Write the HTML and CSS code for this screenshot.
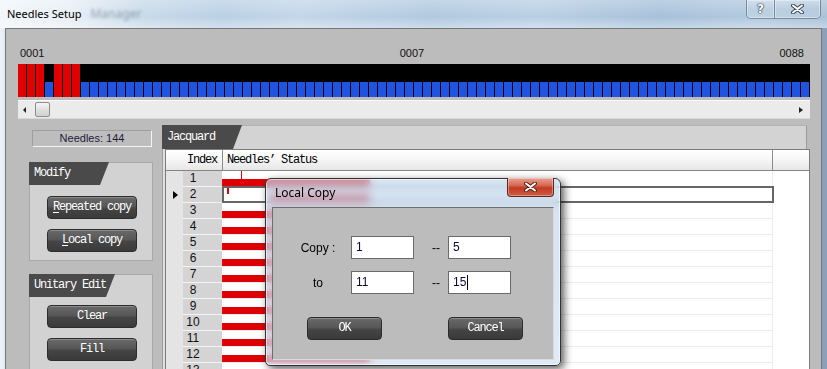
FILE: index.html
```html
<!DOCTYPE html>
<html>
<head>
<meta charset="utf-8">
<title>Needles Setup</title>
<link rel="stylesheet" href="styles.css">
</head>
<body>
<div class="win">
  <div class="titlebar">
    <span class="title">Needles Setup</span>
    <span class="ghost">Manager</span>
    <div class="caps">
      <div class="cap cap-help">?</div>
      <div class="cap cap-close">
        <svg width="13" height="10" viewBox="0 0 13 10"><path d="M2 1.5L11 8.5M11 1.5L2 8.5" stroke="#3b4a5a" stroke-width="4" stroke-linecap="round"/><path d="M2 1.5L11 8.5M11 1.5L2 8.5" stroke="#fff" stroke-width="2" stroke-linecap="round"/></svg>
      </div>
    </div>
  </div>
  <div class="body">
    <div class="client">
      <div class="ruler"><span>0001</span><span>0007</span><span>0088</span></div>
      <div class="needles">
        <i class="r"></i><i class="r"></i><i class="r"></i><i class="b"></i><i class="r"></i><i class="r"></i><i class="r"></i><i class="b"></i>
        <i class="b"></i><i class="b"></i><i class="b"></i><i class="b"></i><i class="b"></i><i class="b"></i><i class="b"></i><i class="b"></i>
        <i class="b"></i><i class="b"></i><i class="b"></i><i class="b"></i><i class="b"></i><i class="b"></i><i class="b"></i><i class="b"></i>
        <i class="b"></i><i class="b"></i><i class="b"></i><i class="b"></i><i class="b"></i><i class="b"></i><i class="b"></i><i class="b"></i>
        <i class="b"></i><i class="b"></i><i class="b"></i><i class="b"></i><i class="b"></i><i class="b"></i><i class="b"></i><i class="b"></i>
        <i class="b"></i><i class="b"></i><i class="b"></i><i class="b"></i><i class="b"></i><i class="b"></i><i class="b"></i><i class="b"></i>
        <i class="b"></i><i class="b"></i><i class="b"></i><i class="b"></i><i class="b"></i><i class="b"></i><i class="b"></i><i class="b"></i>
        <i class="b"></i><i class="b"></i><i class="b"></i><i class="b"></i><i class="b"></i><i class="b"></i><i class="b"></i><i class="b"></i>
        <i class="b"></i><i class="b"></i><i class="b"></i><i class="b"></i><i class="b"></i><i class="b"></i><i class="b"></i><i class="b"></i>
        <i class="b"></i><i class="b"></i><i class="b"></i><i class="b"></i><i class="b"></i><i class="b"></i><i class="b"></i><i class="b"></i>
        <i class="b"></i><i class="b"></i><i class="b"></i><i class="b"></i><i class="b"></i><i class="b"></i><i class="b"></i><i class="b"></i>
      </div>
      <div class="hscroll">
        <div class="sbtn"><span class="arr-l"></span></div>
        <div class="thumb"></div>
        <div class="track"></div>
        <div class="sbtn"><span class="arr-r"></span></div>
      </div>
      <div class="lower">
        <div class="leftpanel">
          <div class="count">Needles: 144</div>
          <div class="group g-modify">
            <div class="ghead mono">Modify</div>
            <div class="btn mono"><u>R</u>epeated copy</div>
            <div class="btn mono btn-second"><u>L</u>ocal copy</div>
          </div>
          <div class="group g-unit">
            <div class="ghead ghead-wide mono">Unitary Edit</div>
            <div class="btn mono btn-first-u">Clear</div>
            <div class="btn mono btn-second">Fill</div>
          </div>
        </div>
        <div class="tabs">
          <div class="strip"><div class="tab mono">Jacquard</div></div>
          <div class="page">
            <div class="grid">
              <div class="ghdr mono">
                <div class="h-index">Index</div>
                <div class="h-status">Needles’ Status</div>
                <div class="h-extra"></div>
              </div>
              <div class="row"><div class="rh"></div><div class="idx">1</div><div class="st"><i class="tick"></i><b class="band"></b></div><div class="ex"></div></div>
              <div class="row"><div class="rh"><span class="cur"></span></div><div class="idx">2</div><div class="st"><i class="tick2"></i><b class="band band-hidden"></b><span class="sel"></span></div><div class="ex"></div></div>
              <div class="row"><div class="rh"></div><div class="idx">3</div><div class="st"><b class="band"></b></div><div class="ex"></div></div>
              <div class="row"><div class="rh"></div><div class="idx">4</div><div class="st"><b class="band"></b></div><div class="ex"></div></div>
              <div class="row"><div class="rh"></div><div class="idx">5</div><div class="st"><b class="band"></b></div><div class="ex"></div></div>
              <div class="row"><div class="rh"></div><div class="idx">6</div><div class="st"><b class="band"></b></div><div class="ex"></div></div>
              <div class="row"><div class="rh"></div><div class="idx">7</div><div class="st"><b class="band"></b></div><div class="ex"></div></div>
              <div class="row"><div class="rh"></div><div class="idx">8</div><div class="st"><b class="band"></b></div><div class="ex"></div></div>
              <div class="row"><div class="rh"></div><div class="idx">9</div><div class="st"><b class="band"></b></div><div class="ex"></div></div>
              <div class="row"><div class="rh"></div><div class="idx">10</div><div class="st"><b class="band"></b></div><div class="ex"></div></div>
              <div class="row"><div class="rh"></div><div class="idx">11</div><div class="st"><b class="band"></b></div><div class="ex"></div></div>
              <div class="row"><div class="rh"></div><div class="idx">12</div><div class="st"><b class="band"></b></div><div class="ex"></div></div>
              <div class="row"><div class="rh"></div><div class="idx">13</div><div class="st"><b class="band"></b></div><div class="ex"></div></div>
            </div>
          </div>
        </div>
      </div>
    </div>
  </div>

  <div class="dialog">
    <div class="dlg-title">Local Copy</div>
    <div class="dlg-close">
      <svg width="13" height="10" viewBox="0 0 13 10"><path d="M2 1.5L11 8.5M11 1.5L2 8.5" stroke="#5a2418" stroke-width="4" stroke-linecap="round"/><path d="M2 1.5L11 8.5M11 1.5L2 8.5" stroke="#fff" stroke-width="2" stroke-linecap="round"/></svg>
    </div>
    <div class="dlg-client">
      <div class="drow">
        <span class="dlabel">Copy :</span>
        <span class="inp">1</span>
        <span class="dash">--</span>
        <span class="inp">5</span>
      </div>
      <div class="drow drow2">
        <span class="dlabel">to</span>
        <span class="inp">11</span>
        <span class="dash">--</span>
        <span class="inp">15<i class="caret"></i></span>
      </div>
      <div class="dbtns">
        <div class="btn mono dbtn-ok">OK</div>
        <div class="btn mono dbtn-cancel">Cancel</div>
      </div>
    </div>
  </div>
</div>
</body>
</html>
```

FILE: styles.css
```css
* { box-sizing: border-box; margin: 0; padding: 0; }
html, body { width: 827px; height: 369px; overflow: hidden; }
body {
  font-family: "Liberation Sans", Arial, sans-serif;
  font-size: 12px;
  color: #000;
  background: #dfe8f1;
}
.mono {
  font-family: "Liberation Mono", "Courier New", monospace;
  font-size: 12px;
  letter-spacing: -1.2px;
}

.win {
  position: relative;
  width: 827px;
  height: 369px;
  display: flex;
  flex-direction: column;
  background: linear-gradient(90deg, #eef3f8 0, #e2ebf4 5px, #b8cde2 800px, #8aa1b9 822px, #8aa1b9 827px);
  overflow: hidden;
}

/* title bar */
.titlebar {
  height: 28px;
  flex: none;
  display: flex;
  align-items: center;
  padding-left: 7px;
  position: relative;
  background:
    linear-gradient(180deg, rgba(255,255,255,0.25) 0, rgba(255,255,255,0) 60%, rgba(255,255,255,0.35) 100%),
    linear-gradient(90deg, #f2f6fa 0, #e8eff6 70px, #c9dae9 140px, #bad0e5 220px, #c3d6e9 300px, #b1c9e0 430px, #b9cfe4 540px, #a7c1da 660px, #b2c9df 760px, #a9c1d8 827px);
}
.title {
  font-family: "Noto Sans", "Open Sans", sans-serif;
  font-size: 11px;
  color: #000;
  padding-bottom: 2px;
}
.ghost {
  font-family: "Noto Sans", sans-serif;
  font-size: 12px;
  margin-left: 9px;
  color: rgba(60, 80, 100, 0.45);
  filter: blur(1.4px);
  padding-bottom: 2px;
}
.caps {
  position: absolute;
  top: 0;
  right: 6px;
  display: flex;
}
.cap {
  height: 19px;
  display: flex;
  align-items: center;
  justify-content: center;
  background: linear-gradient(180deg, rgba(255,255,255,0.25), rgba(255,255,255,0.05) 50%, rgba(255,255,255,0.2));
  border: 1px solid rgba(60, 80, 100, 0.55);
  border-top: none;
  box-shadow: inset 0 0 0 1px rgba(255,255,255,0.35);
}
.cap-help {
  width: 28px;
  border-radius: 0 0 0 5px;
  border-right: none;
  font-family: "DejaVu Sans", sans-serif;
  font-weight: bold;
  font-size: 12px;
  color: #fff;
  text-shadow: 0 0 1px #2c3a48, 0 0 1px #2c3a48, 0 0 2px #2c3a48;
}
.cap-close {
  width: 47px;
  border-radius: 0 0 5px 0;
}

/* body/client */
.body {
  flex: 1;
  display: flex;
  padding: 0 5px 0 5px;
  min-height: 0;
}
.client {
  flex: 1;
  background: #bcbcbc;
  border: 1px solid #777;
  border-bottom: none;
  display: flex;
  flex-direction: column;
  min-height: 0;
}
.ruler {
  margin: 18px 11px 0 12px;
  height: 13px;
  line-height: 13px;
  display: flex;
  justify-content: space-between;
  padding: 0 6px 0 2px;
  font-size: 11px;
  color: #111;
}
.needles {
  margin: 4px 11px 0 12px;
  height: 33px;
  background: #000;
  display: flex;
  align-items: flex-end;
}
.needles i {
  display: block;
  width: 8px;
  margin-right: 1px;
  flex: none;
}
.needles .r { height: 33px; background: #e00000; }
.needles .b { height: 15px; background: #1f53e0; }

.hscroll {
  margin: 3px 11px 0 12px;
  height: 19px;
  background: #ebebeb;
  border-top: 1px solid #fafafa;
  border-bottom: 1px solid #d8d8d8;
  display: flex;
  align-items: center;
}
.sbtn {
  width: 16px;
  height: 17px;
  display: flex;
  align-items: center;
  justify-content: center;
}
.arr-l {
  width: 0; height: 0;
  border-right: 3px solid #222;
  border-top: 3px solid transparent;
  border-bottom: 3px solid transparent;
  margin-left: -4px;
}
.arr-r {
  width: 0; height: 0;
  border-left: 4px solid #222;
  border-top: 3px solid transparent;
  border-bottom: 3px solid transparent;
  margin-left: -2px;
}
.thumb {
  width: 15px;
  height: 15px;
  margin-left: 1px;
  border: 1px solid #8d8d8d;
  border-radius: 2px;
  background: linear-gradient(180deg, #f6f6f6, #dedede 55%, #d0d0d0);
}
.track { flex: 1; }

.lower {
  flex: 1;
  margin-top: 6px;
  padding-right: 11px;
  display: flex;
  min-height: 0;
}

/* left panel */
.leftpanel {
  width: 156px;
  flex: none;
  display: flex;
  flex-direction: column;
}
.count {
  margin: 5px 0 0 26px;
  width: 120px;
  height: 17px;
  line-height: 15px;
  text-align: center;
  font-size: 11px;
  color: #1c1c3a;
  background: #bdbdbd;
  border: 1px solid;
  border-color: #9e9e9e #f4f4f4 #f4f4f4 #9e9e9e;
}
.group {
  margin: 15px 0 0 23px;
  width: 124px;
  background: #d2d2d2;
  border: 1px solid #a8a8a8;
  display: flex;
  flex-direction: column;
  flex: none;
}
.g-modify { height: 99px; }
.g-unit { margin-top: 13px; height: 120px; }
.ghead {
  margin: -1px 0 0 -1px;
  width: 80px;
  height: 23px;
  line-height: 23px;
  padding-left: 5px;
  color: #fff;
  background: #4a4a4a;
  clip-path: polygon(0 0, 100% 0, calc(100% - 9px) 100%, 0 100%);
}
.ghead-wide { width: 86px; }
.btn {
  height: 23px;
  line-height: 21px;
  color: #fff;
  text-align: center;
  border: 1px solid #2c2c2c;
  border-radius: 4px;
  background: linear-gradient(180deg, #6a6a6a 0, #575757 45%, #454545 55%, #3a3a3a 100%);
  box-shadow: inset 0 1px 0 rgba(255,255,255,0.22);
}
.group .btn {
  margin: 11px 0 0 17px;
  width: 90px;
}
.group .btn-first-u { margin-top: 8px; }
.group .btn-second { margin-top: 10px; }
.btn u { text-decoration: underline; text-underline-offset: 2px; }

/* tabs */
.tabs {
  flex: 1;
  display: flex;
  flex-direction: column;
  min-width: 0;
}
.strip {
  height: 24px;
  width: 645px;
  background: #d3d3d3;
  border-top: 1px solid #b2b2b2;
  border-right: 1px solid #999;
  position: relative;
}
.tab {
  margin-top: -1px;
  width: 80px;
  height: 24px;
  line-height: 24px;
  padding-left: 5px;
  color: #fff;
  background: #4a4a4a;
  clip-path: polygon(0 0, 100% 0, calc(100% - 9px) 100%, 0 100%);
}
.page {
  flex: 1;
  background: #dedede;
  border-left: 1px solid #a0a0a0;
  padding-left: 2px;
  min-height: 0;
}
.grid {
  width: 645px;
  height: 100%;
  background: #fff;
  border: 1px solid #7c7c7c;
  border-bottom: none;
  overflow: hidden;
}
.ghdr {
  height: 21px;
  display: flex;
  border-bottom: 1px solid #858585;
  background: linear-gradient(180deg, #ffffff 0, #f7f7f7 45%, #e6e6e6 100%);
  line-height: 20px;
  color: #000;
}
.h-index {
  width: 57px;
  text-align: right;
  padding-right: 5px;
  border-right: 1px solid #8a8a8a;
}
.h-status {
  width: 550px;
  padding-left: 4px;
  border-right: 1px solid #8a8a8a;
}
.h-extra { flex: 1; }

.row {
  height: 16px;
  display: flex;
}
.rh {
  width: 17px;
  background: #e4e4e4;
  display: flex;
  align-items: center;
  padding-left: 7px;
}
.cur {
  width: 0; height: 0;
  border-left: 5px solid #000;
  border-top: 4.5px solid transparent;
  border-bottom: 4.5px solid transparent;
}
.idx {
  width: 39px;
  background: #d4d4d4;
  border-bottom: 1px solid #f4f4f4;
  text-align: center;
  padding-right: 19px;
  line-height: 15px;
  color: #111;
}
.st {
  width: 551px;
  position: relative;
  border-bottom: 1px solid #ececec;
  border-right: 1px solid #ececec;
  display: flex;
  flex-direction: column;
  justify-content: flex-end;
}
.band {
  display: block;
  height: 7px;
  width: 148px;
  background: #e00000;
}
.band-hidden { margin-left: 48px; width: 100px; }
.tick {
  display: block;
  width: 1px;
  height: 8px;
  margin-left: 19px;
  background: #d40000;
}
.tick2 {
  display: block;
  width: 2px;
  height: 7px;
  margin-left: 5px;
  margin-bottom: 1px;
  background: #e00000;
}
.sel {
  position: absolute;
  top: -1px;
  left: 0;
  right: -2px;
  bottom: -1px;
  border: 2px solid #666;
}
.ex { flex: 1; }

/* dialog */
.dialog {
  position: absolute;
  left: 265px;
  top: 178px;
  width: 296px;
  height: 188px;
  border: 1px solid #333;
  border-radius: 6px 6px 5px 5px;
  padding: 0 6px 5px 6px;
  display: flex;
  flex-direction: column;
  background: linear-gradient(180deg, rgba(196,219,242,0.62) 0, rgba(186,210,236,0.6) 30px, rgba(200,220,242,0.6) 100%);
  -webkit-backdrop-filter: blur(4px);
  backdrop-filter: blur(4px);
  box-shadow: 3px 3px 9px rgba(0,0,0,0.65), inset 0 0 0 1px rgba(255,255,255,0.55);
}
.dlg-title {
  height: 28px;
  flex: none;
  line-height: 28px;
  padding-left: 3px;
  font-family: "Noto Sans", "Open Sans", sans-serif;
  font-size: 12px;
  color: #000;
}
.dlg-close {
  position: absolute;
  top: -1px;
  right: 6px;
  width: 47px;
  height: 19px;
  border: 1px solid #5a2a22;
  border-top: none;
  border-radius: 0 0 4px 4px;
  background: linear-gradient(180deg, #e7a293 0, #d66a55 40%, #c23a22 55%, #cf5c42 100%);
  box-shadow: inset 0 0 0 1px rgba(255,255,255,0.35);
  display: flex;
  align-items: center;
  justify-content: center;
}
.dlg-client {
  flex: 1;
  background: #bcbcbc;
  border: 1px solid;
  border-color: #6e6e6e #dadada #dadada #6e6e6e;
  padding-top: 28px;
  display: flex;
  flex-direction: column;
}
.drow {
  display: flex;
  height: 23px;
  align-items: center;
}
.drow2 { margin-top: 12px; }
.dlabel {
  width: 62px;
  margin-left: 14px;
  margin-right: 2px;
  text-align: center;
  color: #000;
}
.inp {
  width: 63px;
  height: 23px;
  line-height: 21px;
  background: #fff;
  border: 1px solid #6a6a6a;
  padding-left: 4px;
  color: #0a0a30;
  display: flex;
  align-items: center;
}
.caret {
  display: block;
  width: 1px;
  height: 15px;
  margin-left: 1px;
  background: #000;
}
.dash {
  width: 34px;
  padding-left: 18px;
  color: #000;
}
.dbtns {
  display: flex;
  margin-top: 23px;
}
.dbtns .btn { width: 75px; }
.dbtn-ok { margin-left: 34px; }
.dbtn-cancel { margin-left: 66px; }
```
